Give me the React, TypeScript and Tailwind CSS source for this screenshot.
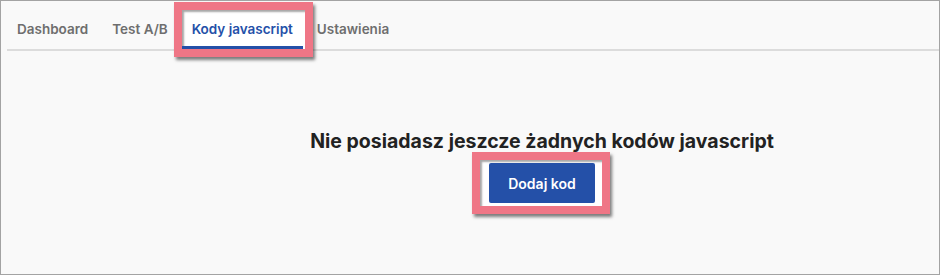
const tabs = ["Dashboard", "Test A/B", "Kody javascript", "Ustawienia"];
const active = "Kody javascript";

const font = { fontFamily: "Inter, 'Noto Sans', sans-serif" };

function Highlight({ className }: { className: string }) {
  return (
    <div
      className={`absolute bg-white border-[8px] border-[#ef7686] shadow-[inset_2px_2px_2px_rgba(0,0,0,0.35),2px_3px_3px_rgba(0,0,0,0.5)] ${className}`}
    />
  );
}

export default function App() {
  return (
    <div
      style={font}
      className="w-[940px] h-[275px] bg-[#f9f9f9] border border-[#a3a3a3] flex flex-col overflow-hidden"
    >
      <nav className="ml-[6px] flex gap-[4px] border-b-2 border-[#dcdcdc]">
        {tabs.map((t) => {
          const isActive = t === active;
          return (
            <div key={t} className="relative">
              {isActive && <Highlight className="left-[-8px] right-[-10px] top-[1px] bottom-[-8px]" />}
              <button
                className={
                  isActive
                    ? "relative z-10 px-[10px] pt-[18px] pb-[7px] border-b-[3px] border-[#2450a8] text-[13.5px] leading-5 font-semibold text-[#2450a8]"
                    : "relative z-10 px-[10px] pt-[18px] pb-[7px] border-b-[3px] border-transparent text-[13.5px] leading-5 font-semibold text-[#6e6e6e]"
                }
              >
                {t}
              </button>
            </div>
          );
        })}
      </nav>
      <main className="flex flex-col items-center pl-[144px] pt-[76px]">
        <h2 className="text-[19.5px] leading-7 font-bold text-[#222222]">
          Nie posiadasz jeszcze żadnych kodów javascript
        </h2>
        <div className="relative mt-[8px]">
          <Highlight className="left-[-17px] right-[-15px] top-[-11px] bottom-[-11px]" />
          <button className="relative z-10 w-[106px] h-[40px] bg-[#2450a8] rounded-[2px] text-white text-[14px] font-semibold">
            Dodaj kod
          </button>
        </div>
      </main>
    </div>
  );
}
